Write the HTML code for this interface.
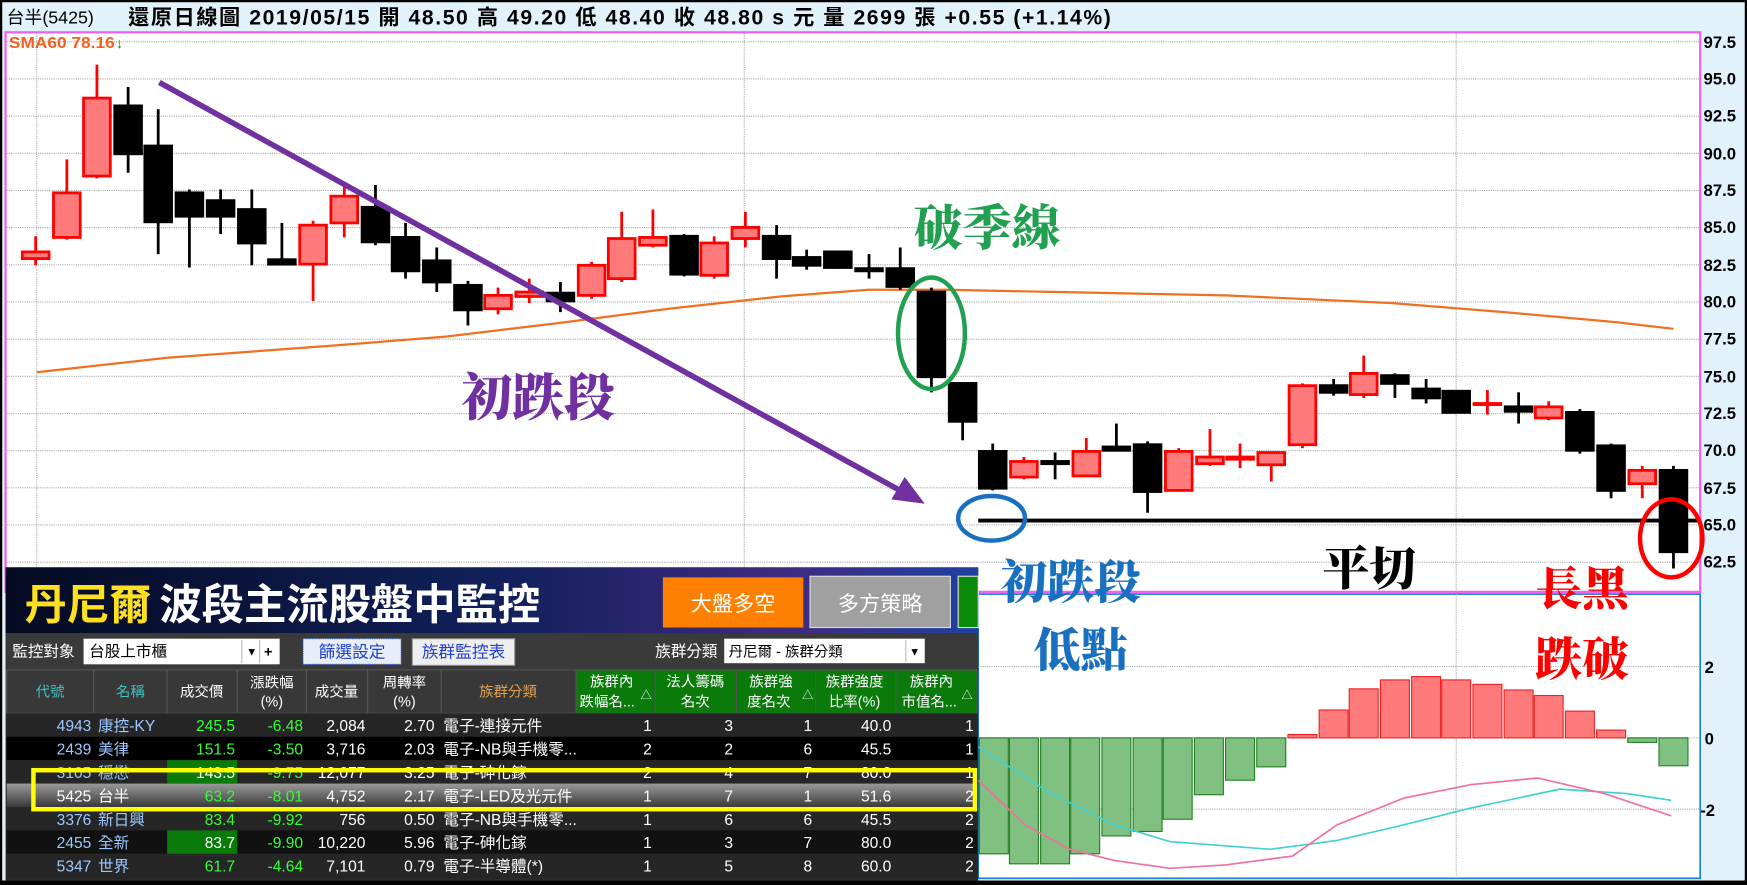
<!DOCTYPE html>
<html><head><meta charset="utf-8"><style>
html,body{margin:0;padding:0;background:#000;overflow:hidden}
svg{display:block}
text{font-family:"Liberation Sans","Noto Sans CJK TC",sans-serif}
.cj{font-family:"Noto Serif CJK SC","Noto Sans CJK TC",serif;font-weight:900}
.ax{font-family:"Liberation Sans",sans-serif;font-weight:bold;font-size:15px;fill:#000}
.tb{font-size:14px;fill:#fff}
.tc{fill:#9cc8ff}
.tg{fill:#33ff33}
.h{font-size:13px}
</style></head><body>
<svg width="1747" height="885" viewBox="0 0 1568 794" preserveAspectRatio="none" xmlns="http://www.w3.org/2000/svg">
<rect x="0" y="0" width="1568" height="794" fill="#000"/>
<rect x="2" y="2" width="1564" height="788" fill="#e2f2fb"/>
<!-- title -->
<text x="6" y="21" font-size="16" fill="#000">台半(5425)</text>
<text x="115" y="22" font-size="19" font-weight="bold" fill="#000" textLength="882" lengthAdjust="spacing">還原日線圖  2019/05/15  開 48.50  高 49.20  低 48.40  收 48.80 s 元  量 2699 張  +0.55 (+1.14%)</text>
<!-- chart area -->
<rect x="5" y="29" width="1521" height="502" fill="#fff" stroke="#f060f0" stroke-width="2"/>
<g stroke="#aaa" stroke-width="1" stroke-dasharray="1,1">
<line x1="6" x2="1525" y1="37.5" y2="37.5"/><line x1="6" x2="1525" y1="70.8" y2="70.8"/><line x1="6" x2="1525" y1="104.2" y2="104.2"/><line x1="6" x2="1525" y1="137.5" y2="137.5"/><line x1="6" x2="1525" y1="170.9" y2="170.9"/><line x1="6" x2="1525" y1="204.2" y2="204.2"/><line x1="6" x2="1525" y1="237.6" y2="237.6"/><line x1="6" x2="1525" y1="270.9" y2="270.9"/><line x1="6" x2="1525" y1="304.3" y2="304.3"/><line x1="6" x2="1525" y1="337.6" y2="337.6"/><line x1="6" x2="1525" y1="371" y2="371"/><line x1="6" x2="1525" y1="404.3" y2="404.3"/><line x1="6" x2="1525" y1="437.7" y2="437.7"/><line x1="6" x2="1525" y1="471" y2="471"/><line x1="6" x2="1525" y1="504.4" y2="504.4"/>
<line x1="33" x2="33" y1="30" y2="530"/><line x1="668" x2="668" y1="30" y2="530"/><line x1="1307" x2="1307" y1="30" y2="530"/>
</g>
<g class="ax">
<text x="1529" y="43">97.5</text><text x="1529" y="76">95.0</text><text x="1529" y="109">92.5</text><text x="1529" y="143">90.0</text><text x="1529" y="176">87.5</text><text x="1529" y="209">85.0</text><text x="1529" y="243">82.5</text><text x="1529" y="276">80.0</text><text x="1529" y="309">77.5</text><text x="1529" y="343">75.0</text><text x="1529" y="376">72.5</text><text x="1529" y="409">70.0</text><text x="1529" y="443">67.5</text><text x="1529" y="476">65.0</text><text x="1529" y="509">62.5</text>
</g>
<text x="8" y="43" font-size="14" fill="#f06020" font-weight="bold" textLength="95" lengthAdjust="spacingAndGlyphs">SMA60 78.16</text>
<text x="104" y="43" font-size="13" fill="#090" font-weight="bold">↓</text>
<!-- SMA -->
<polyline fill="none" stroke="#f07020" stroke-width="2" points="33,334 150,321 300,310 400,302 500,290 600,277 700,266 780,260 850,260 950,262 1100,265 1250,272 1350,280 1450,289 1502,295"/>
<!-- candles -->
<g stroke-width="2.5">
<g stroke="#f00" fill="#ff7b7b">
<line x1="32" x2="32" y1="212" y2="238"/><rect x="20" y="226" width="24" height="6"/>
<line x1="60" x2="60" y1="143" y2="215"/><rect x="48" y="173" width="24" height="40"/>
<line x1="87" x2="87" y1="58" y2="160"/><rect x="75" y="88" width="24" height="70"/>
<line x1="281" x2="281" y1="198" y2="270"/><rect x="269" y="202" width="24" height="35"/>
<line x1="309" x2="309" y1="168" y2="213"/><rect x="297" y="176" width="24" height="24"/>
<line x1="447" x2="447" y1="258" y2="282"/><rect x="435" y="265" width="24" height="12"/>
<line x1="475" x2="475" y1="250" y2="272"/><rect x="463" y="262" width="24" height="4"/>
<line x1="531" x2="531" y1="235" y2="268"/><rect x="519" y="238" width="24" height="27"/>
<line x1="558" x2="558" y1="190" y2="253"/><rect x="546" y="214" width="24" height="36"/>
<line x1="586" x2="586" y1="188" y2="222"/><rect x="574" y="213" width="24" height="7"/>
<line x1="641" x2="641" y1="212" y2="250"/><rect x="629" y="218" width="24" height="29"/>
<line x1="669" x2="669" y1="190" y2="222"/><rect x="657" y="204" width="24" height="10"/>
<line x1="919" x2="919" y1="410" y2="430"/><rect x="907" y="414" width="24" height="14"/>
<line x1="975" x2="975" y1="393" y2="428"/><rect x="963" y="405" width="24" height="22"/>
<line x1="1058" x2="1058" y1="402" y2="441"/><rect x="1046" y="405" width="24" height="35"/>
<line x1="1086" x2="1086" y1="385" y2="418"/><rect x="1074" y="410" width="24" height="6"/>
<line x1="1113" x2="1113" y1="398" y2="420"/><rect x="1101" y="410" width="24" height="2"/>
<line x1="1141" x2="1141" y1="405" y2="432"/><rect x="1129" y="406" width="24" height="11"/>
<line x1="1169" x2="1169" y1="344" y2="402"/><rect x="1157" y="346" width="24" height="53"/>
<line x1="1224" x2="1224" y1="319" y2="357"/><rect x="1212" y="335" width="24" height="19"/>
<line x1="1335" x2="1335" y1="350" y2="372"/><rect x="1323" y="362" width="24" height="1"/>
<line x1="1390" x2="1390" y1="360" y2="377"/><rect x="1378" y="365" width="24" height="10"/>
<line x1="1474" x2="1474" y1="418" y2="447"/><rect x="1462" y="422" width="24" height="12"/>
</g>
<g stroke="#000" fill="#000">
<line x1="115" x2="115" y1="78" y2="155"/><rect x="103" y="95" width="24" height="43"/>
<line x1="142" x2="142" y1="98" y2="228"/><rect x="130" y="131" width="24" height="68"/>
<line x1="170" x2="170" y1="170" y2="240"/><rect x="158" y="173" width="24" height="21"/>
<line x1="198" x2="198" y1="170" y2="210"/><rect x="186" y="180" width="24" height="14"/>
<line x1="226" x2="226" y1="170" y2="238"/><rect x="214" y="188" width="24" height="30"/>
<line x1="253" x2="253" y1="200" y2="238"/><rect x="241" y="233" width="24" height="4"/>
<line x1="337" x2="337" y1="166" y2="220"/><rect x="325" y="186" width="24" height="31"/>
<line x1="364" x2="364" y1="200" y2="250"/><rect x="352" y="213" width="24" height="30"/>
<line x1="392" x2="392" y1="222" y2="262"/><rect x="380" y="234" width="24" height="19"/>
<line x1="420" x2="420" y1="252" y2="292"/><rect x="408" y="256" width="24" height="22"/>
<line x1="503" x2="503" y1="253" y2="280"/><rect x="491" y="263" width="24" height="7"/>
<line x1="614" x2="614" y1="210" y2="248"/><rect x="602" y="212" width="24" height="34"/>
<line x1="697" x2="697" y1="202" y2="250"/><rect x="685" y="212" width="24" height="20"/>
<line x1="724" x2="724" y1="224" y2="242"/><rect x="712" y="231" width="24" height="7"/>
<line x1="752" x2="752" y1="225" y2="241"/><rect x="740" y="226" width="24" height="14"/>
<line x1="780" x2="780" y1="228" y2="250"/><rect x="768" y="241" width="24" height="2"/>
<line x1="808" x2="808" y1="222" y2="260"/><rect x="796" y="241" width="24" height="16"/>
<line x1="836" x2="836" y1="258" y2="352"/><rect x="824" y="262" width="24" height="76"/>
<line x1="864" x2="864" y1="344" y2="395"/><rect x="852" y="344" width="24" height="34"/>
<line x1="891" x2="891" y1="398" y2="440"/><rect x="879" y="405" width="24" height="33"/>
<line x1="947" x2="947" y1="406" y2="430"/><rect x="935" y="414" width="24" height="2"/>
<line x1="1002" x2="1002" y1="380" y2="404"/><rect x="990" y="401" width="24" height="3"/>
<line x1="1030" x2="1030" y1="396" y2="460"/><rect x="1018" y="399" width="24" height="42"/>
<line x1="1197" x2="1197" y1="340" y2="355"/><rect x="1185" y="346" width="24" height="6"/>
<line x1="1252" x2="1252" y1="335" y2="357"/><rect x="1240" y="337" width="24" height="7"/>
<line x1="1280" x2="1280" y1="340" y2="362"/><rect x="1268" y="349" width="24" height="8"/>
<line x1="1307" x2="1307" y1="350" y2="371"/><rect x="1295" y="351" width="24" height="19"/>
<line x1="1363" x2="1363" y1="352" y2="380"/><rect x="1351" y="365" width="24" height="4"/>
<line x1="1418" x2="1418" y1="367" y2="407"/><rect x="1406" y="370" width="24" height="34"/>
<line x1="1446" x2="1446" y1="398" y2="447"/><rect x="1434" y="400" width="24" height="40"/>
<line x1="1502" x2="1502" y1="418" y2="510"/><rect x="1490" y="422" width="24" height="73"/>
</g></g>
<!-- annotations -->
<line x1="143" y1="74" x2="815" y2="444" stroke="#7030a0" stroke-width="5"/>
<polygon points="830,452 800,448 812,428" fill="#7030a0"/>
<text class="cj" x="414" y="373" font-size="46" fill="#7030a0">初跌段</text>
<text class="cj" x="820" y="220" font-size="44" fill="#20a050">破季線</text>
<ellipse cx="836" cy="299" rx="30" ry="50" fill="none" stroke="#20a050" stroke-width="4"/>
<line x1="878" y1="467" x2="1525" y2="467" stroke="#000" stroke-width="3.5"/>
<ellipse cx="890" cy="465" rx="30" ry="20" fill="none" stroke="#1a70c0" stroke-width="4"/>
<ellipse cx="1500" cy="483" rx="28" ry="35" fill="none" stroke="#f00" stroke-width="4"/>
<!-- lower panel -->
<rect x="878" y="533" width="648" height="255" fill="#fff" stroke="#1a80d0" stroke-width="1.5"/>
<g stroke="#aaa" stroke-dasharray="1,1"><line x1="878" x2="1525" y1="598" y2="598"/><line x1="878" x2="1525" y1="662" y2="662"/><line x1="878" x2="1525" y1="726" y2="726"/><line x1="1307" x2="1307" y1="533" y2="788"/></g>
<text class="cj" x="898" y="537" font-size="42" fill="#1a70c0">初跌段</text>
<text class="cj" x="928" y="598" font-size="42" fill="#1a70c0">低點</text>
<text class="cj" x="1187" y="525" font-size="42" fill="#000">平切</text>
<text class="cj" x="1378" y="543" font-size="42" fill="#f00">長黑</text>
<text class="cj" x="1378" y="606" font-size="42" fill="#f00">跌破</text>
<g class="ax"><text x="1530" y="604">2</text><text x="1530" y="668">0</text><text x="1526" y="732">-2</text></g>
<g fill="#80c080" stroke="#208020" stroke-width="1">
<rect x="879" y="662" width="26" height="104"/><rect x="906" y="662" width="26" height="113"/><rect x="934" y="662" width="26" height="113"/><rect x="961" y="662" width="26" height="104"/><rect x="989" y="662" width="26" height="88"/><rect x="1017" y="662" width="26" height="84"/><rect x="1044" y="662" width="26" height="73"/><rect x="1072" y="662" width="26" height="51"/><rect x="1100" y="662" width="26" height="38"/><rect x="1128" y="662" width="26" height="26"/><rect x="1461" y="662" width="26" height="4"/><rect x="1489" y="662" width="26" height="25"/>
</g>
<g fill="#ff7b7b" stroke="#f02020" stroke-width="1">
<rect x="1156" y="659" width="26" height="3"/><rect x="1184" y="637" width="26" height="25"/><rect x="1211" y="618" width="26" height="44"/><rect x="1239" y="610" width="26" height="52"/><rect x="1267" y="607" width="26" height="55"/><rect x="1294" y="610" width="26" height="52"/><rect x="1322" y="614" width="26" height="48"/><rect x="1350" y="619" width="26" height="43"/><rect x="1377" y="624" width="26" height="38"/><rect x="1405" y="638" width="26" height="24"/><rect x="1433" y="655" width="26" height="7"/>
</g>
<polyline fill="none" stroke="#40d0d0" stroke-width="1.5" points="878,670 940,710 1000,740 1050,755 1140,762 1200,754 1260,740 1320,725 1400,708 1460,712 1500,718"/>
<polyline fill="none" stroke="#f070a0" stroke-width="1.5" points="878,700 920,740 960,762 1000,772 1050,779 1100,776 1160,768 1200,740 1260,716 1320,704 1380,698 1440,712 1500,732"/>
<!-- table panel -->
<defs>
<linearGradient id="bn" x1="0" x2="1" y1="0" y2="0"><stop offset="0" stop-color="#050a22"/><stop offset="0.5" stop-color="#10205a"/><stop offset="0.8" stop-color="#402a80"/><stop offset="1" stop-color="#2040a0"/></linearGradient>
<linearGradient id="hl" x1="0" x2="0" y1="0" y2="1"><stop offset="0" stop-color="#9a9a9a"/><stop offset="0.5" stop-color="#6a6a6a"/><stop offset="1" stop-color="#3a3a3a"/></linearGradient>
</defs>
<rect x="5" y="509" width="873" height="281" fill="#2a2a2a"/>
<rect x="5" y="509" width="873" height="59" fill="url(#bn)"/>
<text x="22" y="556" font-size="38" font-weight="bold" fill="#ffe020">丹尼爾</text>
<text x="143" y="556" font-size="38" font-weight="bold" fill="#fff">波段主流股盤中監控</text>
<rect x="595" y="518" width="126" height="45" fill="#ff8000"/>
<text x="658" y="548" font-size="19" fill="#fff" text-anchor="middle">大盤多空</text>
<rect x="727" y="517" width="126" height="46" fill="#a0a0a0" stroke="#ddd"/>
<text x="790" y="548" font-size="19" fill="#fff" text-anchor="middle">多方策略</text>
<rect x="860" y="517" width="18" height="46" fill="#0a8a0a" stroke="#ddd"/>
<rect x="5" y="568" width="873" height="33" fill="#3a3a3a"/>
<text x="11" y="589" font-size="14" fill="#fff">監控對象</text>
<rect x="75" y="573" width="176" height="23" fill="#fff"/>
<text x="80" y="589" font-size="14" fill="#000">台股上市櫃</text>
<line x1="217" x2="217" y1="574" y2="595" stroke="#bbb"/><line x1="233" x2="233" y1="574" y2="595" stroke="#bbb"/>
<text x="221" y="588" font-size="10" fill="#000">▼</text><text x="237" y="589" font-size="13" fill="#000" font-weight="bold">+</text>
<rect x="272" y="573" width="88" height="23" fill="#e8eef8" stroke="#3060d0" stroke-dasharray="1,1"/>
<text x="316" y="590" font-size="15" fill="#2040d0" text-anchor="middle">篩選設定</text>
<rect x="370" y="573" width="92" height="24" fill="#eee" stroke="#888"/>
<text x="416" y="590" font-size="15" fill="#2040d0" text-anchor="middle">族群監控表</text>
<text x="588" y="589" font-size="14" fill="#fff">族群分類</text>
<rect x="650" y="573" width="180" height="22" fill="#fff"/>
<text x="654" y="589" font-size="13" fill="#000">丹尼爾 - 族群分類</text>
<line x1="813" x2="813" y1="574" y2="594" stroke="#bbb"/><text x="816" y="588" font-size="10" fill="#000">▼</text>
<!-- header -->
<g stroke="#555" stroke-width="1">
<rect x="6" y="601" width="78" height="39" fill="#383838"/><rect x="84" y="601" width="66" height="39" fill="#383838"/><rect x="150" y="601" width="63" height="39" fill="#383838"/><rect x="213" y="601" width="62" height="39" fill="#383838"/><rect x="275" y="601" width="55" height="39" fill="#383838"/><rect x="330" y="601" width="66" height="39" fill="#383838"/><rect x="396" y="601" width="121" height="39" fill="#383838"/>
<rect x="517" y="601" width="71" height="39" fill="#0a7a0a"/><rect x="588" y="601" width="73" height="39" fill="#0a7a0a"/><rect x="661" y="601" width="71" height="39" fill="#0a7a0a"/><rect x="732" y="601" width="72" height="39" fill="#0a7a0a"/><rect x="804" y="601" width="73" height="39" fill="#0a7a0a"/>
</g>
<g class="h" text-anchor="middle">
<text x="45" y="625" fill="#40c0c0">代號</text><text x="117" y="625" fill="#40c0c0">名稱</text><text x="181" y="625" fill="#fff">成交價</text>
<text x="244" y="617" fill="#fff">漲跌幅</text><text x="244" y="634" fill="#fff">(%)</text>
<text x="302" y="625" fill="#fff">成交量</text>
<text x="363" y="617" fill="#fff">周轉率</text><text x="363" y="634" fill="#fff">(%)</text>
<text x="456" y="625" fill="#e0a050">族群分類</text>
<text x="549" y="616" fill="#fff">族群內</text><text x="545" y="634" fill="#fff">跌幅名...</text>
<text x="624" y="616" fill="#fff">法人籌碼</text><text x="624" y="634" fill="#fff">名次</text>
<text x="692" y="616" fill="#fff">族群強</text><text x="690" y="634" fill="#fff">度名次</text>
<text x="767" y="616" fill="#fff">族群強度</text><text x="767" y="634" fill="#fff">比率(%)</text>
<text x="836" y="616" fill="#fff">族群內</text><text x="834" y="634" fill="#fff">市值名...</text>
<text x="580" y="627" fill="#fff" font-size="10">△</text><text x="725" y="627" fill="#fff" font-size="10">△</text><text x="868" y="627" fill="#fff" font-size="10">△</text>
</g>
<!-- rows -->
<rect x="6" y="640" width="871" height="21" fill="#262626"/>
<rect x="6" y="661" width="871" height="21" fill="#000"/>
<rect x="6" y="682" width="871" height="21" fill="#262626"/>
<rect x="6" y="703" width="871" height="21" fill="url(#hl)"/>
<rect x="6" y="724" width="871" height="21" fill="#262626"/>
<rect x="6" y="745" width="871" height="21" fill="#111"/>
<rect x="6" y="766" width="871" height="22" fill="#262626"/>
<rect x="150" y="682" width="63" height="21" fill="#0a7a0a"/>
<rect x="150" y="745" width="63" height="21" fill="#0a7a0a"/>
<g class="tb">
<g text-anchor="end">
<text x="82" y="656" class="tc">4943</text><text x="211" y="656" class="tg">245.5</text><text x="272" y="656" class="tg">-6.48</text><text x="328" y="656">2,084</text><text x="390" y="656">2.70</text><text x="585" y="656">1</text><text x="658" y="656">3</text><text x="729" y="656">1</text><text x="800" y="656">40.0</text><text x="874" y="656">1</text>
<text x="82" y="677" class="tc">2439</text><text x="211" y="677" class="tg">151.5</text><text x="272" y="677" class="tg">-3.50</text><text x="328" y="677">3,716</text><text x="390" y="677">2.03</text><text x="585" y="677">2</text><text x="658" y="677">2</text><text x="729" y="677">6</text><text x="800" y="677">45.5</text><text x="874" y="677">1</text>
<text x="82" y="698" class="tc">3105</text><text x="211" y="698" fill="#fff">143.5</text><text x="272" y="698" class="tg">-9.75</text><text x="328" y="698">12,077</text><text x="390" y="698">3.25</text><text x="585" y="698">2</text><text x="658" y="698">4</text><text x="729" y="698">7</text><text x="800" y="698">80.0</text><text x="874" y="698">1</text>
<text x="82" y="719" fill="#fff">5425</text><text x="211" y="719" class="tg">63.2</text><text x="272" y="719" class="tg">-8.01</text><text x="328" y="719">4,752</text><text x="390" y="719">2.17</text><text x="585" y="719">1</text><text x="658" y="719">7</text><text x="729" y="719">1</text><text x="800" y="719">51.6</text><text x="874" y="719">2</text>
<text x="82" y="740" class="tc">3376</text><text x="211" y="740" class="tg">83.4</text><text x="272" y="740" class="tg">-9.92</text><text x="328" y="740">756</text><text x="390" y="740">0.50</text><text x="585" y="740">1</text><text x="658" y="740">6</text><text x="729" y="740">6</text><text x="800" y="740">45.5</text><text x="874" y="740">2</text>
<text x="82" y="761" class="tc">2455</text><text x="211" y="761" fill="#fff">83.7</text><text x="272" y="761" class="tg">-9.90</text><text x="328" y="761">10,220</text><text x="390" y="761">5.96</text><text x="585" y="761">1</text><text x="658" y="761">3</text><text x="729" y="761">7</text><text x="800" y="761">80.0</text><text x="874" y="761">2</text>
<text x="82" y="782" class="tc">5347</text><text x="211" y="782" class="tg">61.7</text><text x="272" y="782" class="tg">-4.64</text><text x="328" y="782">7,101</text><text x="390" y="782">0.79</text><text x="585" y="782">1</text><text x="658" y="782">5</text><text x="729" y="782">8</text><text x="800" y="782">60.0</text><text x="874" y="782">2</text>
</g>
<text x="88" y="656" class="tc">康控-KY</text><text x="398" y="656">電子-連接元件</text>
<text x="88" y="677" class="tc">美律</text><text x="398" y="677">電子-NB與手機零...</text>
<text x="88" y="698" class="tc">穩懋</text><text x="398" y="698">電子-砷化鎵</text>
<text x="88" y="719" fill="#fff">台半</text><text x="398" y="719">電子-LED及光元件</text>
<text x="88" y="740" class="tc">新日興</text><text x="398" y="740">電子-NB與手機零...</text>
<text x="88" y="761" class="tc">全新</text><text x="398" y="761">電子-砷化鎵</text>
<text x="88" y="782" class="tc">世界</text><text x="398" y="782">電子-半導體(*)</text>
</g>
<rect x="30" y="691" width="845" height="35" fill="none" stroke="#ffff00" stroke-width="4"/>
</svg>
</body></html>
